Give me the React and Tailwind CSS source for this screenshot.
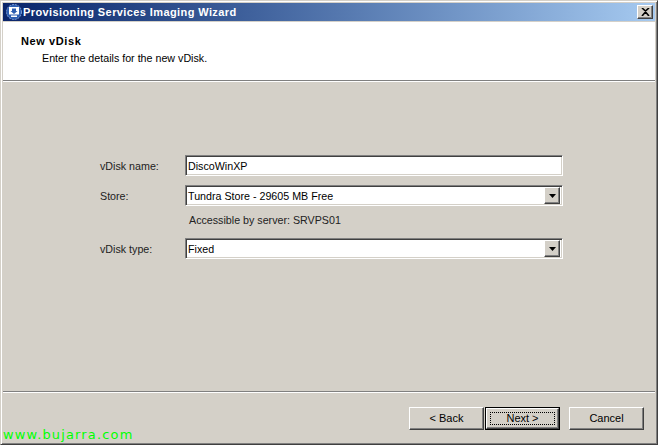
const face = "bg-[#d4d0c8]";
const raised = "bg-[#d4d0c8] border border-t-white border-l-white border-r-[#404040] border-b-[#404040] shadow-[inset_-1px_-1px_0_#808080]";
const sunken = "bg-white border border-t-[#808080] border-l-[#808080] border-r-white border-b-white shadow-[inset_1px_1px_0_#404040,inset_-1px_-1px_0_#d4d0c8]";

function Field({ children, dropdown }) {
  return (
    <div className={`${sunken} w-[378px] h-[21px] flex items-center pl-[2px] pr-[2px] text-[10.7px] text-black`}>
      <span className="flex-1 pt-[2px]">{children}</span>
      {dropdown && (
        <div className={`${raised} w-[16px] h-[17px] flex items-center justify-center`}>
          <svg width="7" height="4" viewBox="0 0 7 4"><path d="M0 0h7L3.5 4z" fill="#000" /></svg>
        </div>
      )}
    </div>
  );
}

function Row({ label, children }) {
  return (
    <div className="flex items-center">
      <div className="w-[85px] pt-[2px] text-[10.7px] text-[#222]">{label}</div>
      {children}
    </div>
  );
}

function Btn({ children, def }) {
  return (
    <div className={def ? "border border-black" : ""}>
      <div className={`${raised} ${def ? "w-[73px] h-[21px]" : "w-[75px] h-[23px]"} flex items-center justify-center text-[11px] text-black relative`}>
        {children}
        {def && <div className="absolute inset-[3px] border border-dotted border-black" />}
      </div>
    </div>
  );
}

export default function App() {
  return (
    <div className={`${face} w-[658px] h-[445px] border border-t-[#d4d0c8] border-l-[#d4d0c8] border-r-[#404040] border-b-[#404040] shadow-[inset_1px_1px_0_#fff,inset_-1px_-1px_0_#808080] p-[2px] pb-[2px] flex flex-col overflow-hidden relative font-['Liberation_Sans',Arial,sans-serif]`}>
      <div className="h-[18px] mt-[0px] flex items-center bg-gradient-to-r from-[#0a246a] to-[#a6caf0] pl-[3px] pr-[2px] shrink-0">
        <svg width="16" height="16" viewBox="0 0 16 16" className="shrink-0">
          <circle cx="8" cy="8" r="7.5" fill="#2c5db0" stroke="#7f9fd8" strokeDasharray="2 1" />
          <rect x="3" y="3" width="10" height="7.5" fill="#fff" />
          <path d="M6 4.5h4v2.5h1.5L8 10 4.5 7H6z" fill="#2c5db0" />
          <rect x="5" y="11.5" width="6" height="1.5" fill="#fff" />
        </svg>
        <span className="ml-[1px] flex-1 text-[11px] font-bold text-white tracking-[0.4px]">Provisioning Services Imaging Wizard</span>
        <div className={`${raised} w-[16px] h-[14px] flex items-center justify-center`}>
          <svg width="9" height="8" viewBox="0 0 9 8"><path d="M1 0l3.5 3L8 0M1 8l3.5-4L8 8" stroke="#000" strokeWidth="1.6" fill="none" /></svg>
        </div>
      </div>

      <div className="h-[58px] bg-white pt-[13px] pl-[18px] shrink-0 mt-[1px] border-b-0">
        <div className="text-[11px] font-bold text-black leading-[13px] tracking-[0.6px]">New vDisk</div>
        <div className="text-[10.7px] text-black leading-[13px] mt-[4px] ml-[21px]">Enter the details for the new vDisk.</div>
      </div>
      <div className="h-[2px] border-t border-t-[#808080] border-b border-b-white shrink-0" />

      <div className="flex-1 pt-[73px] pl-[97px] flex flex-col text-[10.7px]">
        <Row label="vDisk name:"><Field>DiscoWinXP</Field></Row>
        <div className="mt-[9px]"><Row label="Store:"><Field dropdown>Tundra Store - 29605 MB Free</Field></Row></div>
        <div className="mt-[7px] ml-[89px] text-[#222] leading-[14px]">Accessible by server: SRVPS01</div>
        <div className="mt-[11px]"><Row label="vDisk type:"><Field dropdown>Fixed</Field></Row></div>
      </div>

      <div className="h-[2px] border-t border-t-[#808080] border-b border-b-white shrink-0" />
      <div className="h-[49px] shrink-0 flex items-start justify-end pt-[14px] pr-[11px]">
        <Btn>&lt; Back</Btn>
        <div className="ml-[1px]"><Btn def>Next &gt;</Btn></div>
        <div className="ml-[9px]"><Btn>Cancel</Btn></div>
      </div>

      <div className="absolute left-[2px] bottom-[0px] text-[13px] leading-[18px] text-[#00ff00] tracking-[1.15px] font-['DejaVu_Sans',sans-serif]">www.bujarra.com</div>
    </div>
  );
}
